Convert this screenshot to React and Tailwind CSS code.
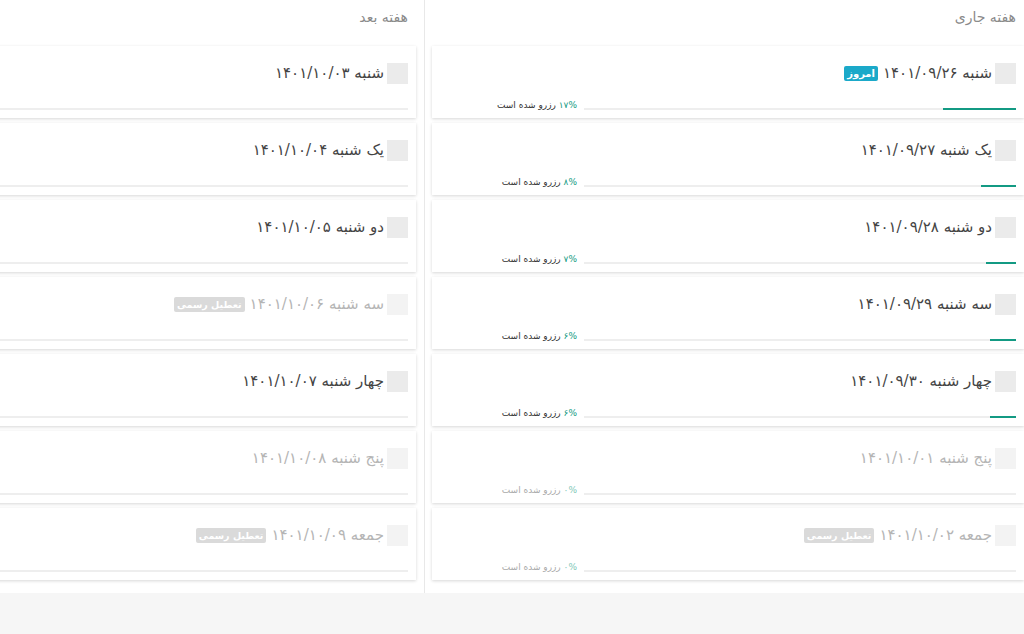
import React from "react";

const currentWeek = [
  { day: "شنبه", date: "۱۴۰۱/۰۹/۲۶", percent: 17, today: true },
  { day: "یک شنبه", date: "۱۴۰۱/۰۹/۲۷", percent: 8 },
  { day: "دو شنبه", date: "۱۴۰۱/۰۹/۲۸", percent: 7 },
  { day: "سه شنبه", date: "۱۴۰۱/۰۹/۲۹", percent: 6 },
  { day: "چهار شنبه", date: "۱۴۰۱/۰۹/۳۰", percent: 6 },
  { day: "پنج شنبه", date: "۱۴۰۱/۱۰/۰۱", percent: 0, off: true },
  { day: "جمعه", date: "۱۴۰۱/۱۰/۰۲", percent: 0, off: true, holiday: true },
];

const nextWeek = [
  { day: "شنبه", date: "۱۴۰۱/۱۰/۰۳", percent: 0 },
  { day: "یک شنبه", date: "۱۴۰۱/۱۰/۰۴", percent: 0 },
  { day: "دو شنبه", date: "۱۴۰۱/۱۰/۰۵", percent: 0 },
  { day: "سه شنبه", date: "۱۴۰۱/۱۰/۰۶", percent: 0, off: true, holiday: true },
  { day: "چهار شنبه", date: "۱۴۰۱/۱۰/۰۷", percent: 0 },
  { day: "پنج شنبه", date: "۱۴۰۱/۱۰/۰۸", percent: 0, off: true },
  { day: "جمعه", date: "۱۴۰۱/۱۰/۰۹", percent: 0, off: true, holiday: true },
];

const toFa = (n) => String(n).replace(/\d/g, (d) => "۰۱۲۳۴۵۶۷۸۹"[d]);

const DayCard = ({ item, showLabel }) => {
  const faded = item.off;
  return (
    <div className="bg-white h-[72px] px-2 pt-[17px] shadow-[0_1px_3px_rgba(0,0,0,0.16)]">
      {/* Title row */}
      <div className="flex items-center h-[21px]">
        <span
          className={`w-[21px] h-[21px] shrink-0 ${
            faded ? "bg-[#f3f3f3]" : "bg-[#ebebeb]"
          }`}
        ></span>
        <span
          className={`mr-[3px] text-[15px] whitespace-nowrap ${
            faded ? "text-[#b5b5b5]" : "text-[#444]"
          }`}
        >
          {item.day} {item.date}
        </span>
        {item.today && (
          <span className="mr-[5px] h-[15px] px-[3px] flex items-center rounded-[2px] bg-[#1ba9c9] text-white text-[10px] font-bold leading-none">
            امروز
          </span>
        )}
        {item.holiday && (
          <span className="mr-[5px] h-[15px] px-[3px] flex items-center rounded-[2px] bg-[#dadada] text-white text-[9.5px] font-bold leading-none">
            تعطیل رسمی
          </span>
        )}
      </div>

      {/* Progress row */}
      <div className="flex items-center h-[12px] mt-[19px]">
        <div className={`${showLabel ? "w-3/4" : "w-full"} h-[2px] bg-[#eeeeee] relative`}>
          <div
            className="absolute right-0 top-0 h-[2px] bg-[#139a83]"
            style={{ width: `${item.percent}%` }}
          ></div>
        </div>
        {showLabel && (
          <div
            className={`w-1/4 pr-[7px] mb-[7px] text-[9px] leading-none whitespace-nowrap ${
              faded ? "text-[#aaa]" : "text-[#333]"
            }`}
          >
            <span className={faded ? "text-[#7fc9b8]" : "text-[#139a83]"}>
              {toFa(item.percent)}%
            </span>{" "}
            رزرو شده است
          </div>
        )}
      </div>
    </div>
  );
};

const WeekColumn = ({ title, days, className, showLabel }) => (
  <div className={`w-[600px] shrink-0 ${className}`}>
    <div className="h-[46px] px-2 pt-[7px] text-[14px] text-[#8a8a8a]">{title}</div>
    <div className="flex flex-col gap-[5px]">
      {days.map((item) => (
        <DayCard key={item.date} item={item} showLabel={showLabel} />
      ))}
    </div>
  </div>
);

export default function App() {
  return (
    <div
      dir="rtl"
      className="w-[1024px] h-[634px] overflow-hidden bg-[#f6f6f6]"
      style={{ fontFamily: '"DejaVu Sans", sans-serif' }}
    >
      <div className="h-[593px] bg-white flex">
        <WeekColumn
          title="هفته جاری"
          days={currentWeek}
          showLabel
          className="pl-[7px] border-l border-[#e8e8e8]"
        />
        <WeekColumn title="هفته بعد" days={nextWeek} className="pr-2" />
      </div>
    </div>
  );
}
